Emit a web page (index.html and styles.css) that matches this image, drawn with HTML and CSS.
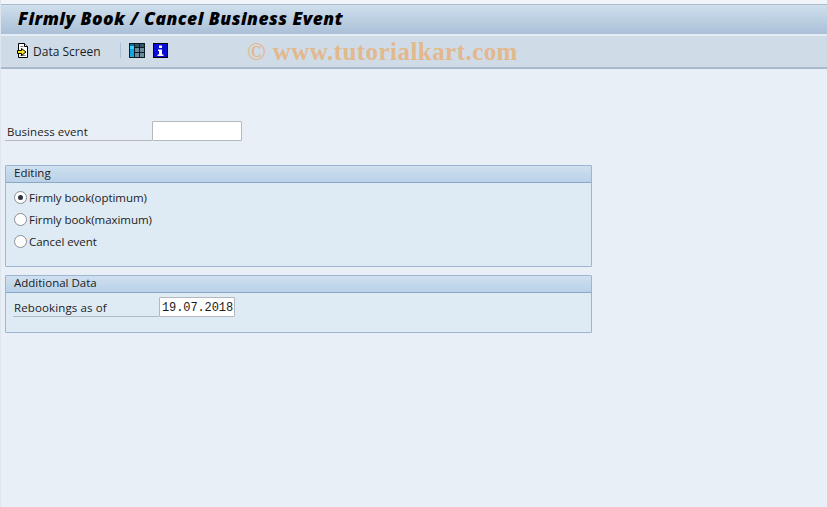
FILE: index.html
```html
<!DOCTYPE html>
<html lang="en">
<head>
<meta charset="utf-8">
<title>Firmly Book / Cancel Business Event</title>
<link rel="stylesheet" href="styles.css">
</head>
<body>
<div class="window">
  <header class="titlebar"><h1 class="title">Firmly Book / Cancel Business Event</h1></header>
  <div class="toolbar">
    <button class="tool tool-text">
      <svg class="icon" width="14" height="15" viewBox="0 0 14 15"><path d="M2.500.5h6l3 3v11h-9z" fill="#fff" stroke="#000"/><path d="M8.500.5v3h3" fill="#ddd" stroke="#000"/><path d="M4.500 3.500h3M4.500 12.500h5" stroke="#777"/><path d="M1.500 7.500h4v-2l4.500 3.500-4.500 3.500v-2h-4z" fill="#f8e020" stroke="#000"/></svg>
      <span>Data Screen</span>
    </button>
    <span class="sep"></span>
    <svg class="icon grid-icon" width="16" height="15" viewBox="0 0 16 15"><rect width="16" height="15" fill="#0c1a22"/><path d="M1 1h4v2H1z" fill="#0c6f96"/><path d="M1 3h4v3H1z" fill="#30d0f8"/><path d="M1 6h4v8H1z" fill="#14a4e0"/><path d="M6 1h4v3H6zM11 1h4v3h-4z" fill="#2f5566"/><path d="M6 5h4v4H6zM11 5h4v4h-4zM6 10h4v4H6zM11 10h4v4h-4z" fill="#6d8a9a"/></svg>
    <svg class="icon info-icon" width="15" height="15" viewBox="0 0 15 15"><rect width="15" height="15" fill="#000"/><rect x="1" y="1" width="13" height="13" fill="#0a0ed0"/><path d="M6 2.500h3v2.500H6zM5 6.500h4v5h1.500v1.500h-6v-1.500H6v-3.500H5z" fill="#fff"/></svg>
  </div>
  <div class="watermark">© www.tutorialkart.com</div>

  <main class="content">
    <div class="field-row top-field">
      <label class="field-label label-event">Business event</label>
      <span class="input input-event"></span>
    </div>

    <section class="group group-editing">
      <h2 class="group-title">Editing</h2>
      <div class="group-body radios">
        <div class="radio-row"><span class="radio checked"></span><span>Firmly book(optimum)</span></div>
        <div class="radio-row"><span class="radio"></span><span>Firmly book(maximum)</span></div>
        <div class="radio-row"><span class="radio"></span><span>Cancel event</span></div>
      </div>
    </section>

    <section class="group group-additional">
      <h2 class="group-title">Additional Data</h2>
      <div class="group-body">
        <div class="field-row">
          <label class="field-label label-rebook">Rebookings as of</label>
          <span class="input input-date">19.07.2018</span>
        </div>
      </div>
    </section>
  </main>
</div>
</body>
</html>
```
FILE: styles.css
```css
* { box-sizing: border-box; }
html, body { margin: 0; height: 100%; }
body {
  background: #e8eff7;
  font-family: "Open Sans", "Noto Sans", sans-serif;
  font-size: 11.5px;
  color: #1c1c1c;
  overflow: hidden;
}
.window {
  position: relative;
  height: 507px;
  padding-top: 4px;
  background: #f1f4f8;
  border-left: 1px solid #dfe5ec;
}
.titlebar {
  height: 32px;
  padding: 0 0 4px 17px;
  display: flex;
  align-items: center;
  border-top: 1px solid #a9bad0;
  border-bottom: 2px solid #e4edf5;
  background: linear-gradient(#cfdfec, #aac0d8);
}
.title {
  margin: 0;
  font-family: "Open Sans", sans-serif;
  font-size: 17.5px;
  font-weight: 800;
  font-style: italic;
  letter-spacing: 0.45px;
  color: #000;
  white-space: nowrap;
}
.toolbar {
  height: 33px;
  padding: 0 0 3px 15px;
  display: flex;
  align-items: center;
  background: #cfdce8;
  border-bottom: 2px solid #a9b8cb;
}
.tool {
  display: flex;
  align-items: center;
  gap: 3px;
  padding: 0;
  border: 0;
  background: none;
  font: inherit;
  font-size: 12px;
  color: inherit;
}
.tool span { position: relative; top: 1px; }
.icon { display: block; flex: none; }
.sep {
  width: 1px;
  height: 15px;
  margin: 0 8px 0 19px;
  background: #a9c0d8;
}
.info-icon { margin-left: 8px; }
.watermark {
  position: absolute;
  left: 246px;
  top: 38px;
  font-family: "Liberation Serif", serif;
  font-size: 25px;
  font-weight: bold;
  letter-spacing: 0.45px;
  color: #e3b88c;
  white-space: nowrap;
}
.content {
  background: #e8eff7;
  height: 438px;
  padding: 52px 0 0 4px;
}
.field-row { display: flex; align-items: flex-end; }
.field-label {
  display: block;
  height: 20px;
  line-height: 21px;
  border-bottom: 1px solid #b4b9bf;
  padding-left: 2px;
}
.label-event { width: 147px; letter-spacing: 0.05px; }
.top-field { height: 20px; }
.input {
  display: block;
  height: 20px;
  background: #fff;
  border: 1px solid #b5b9bd;
  border-radius: 1px;
}
.input-event { width: 90px; }
.group {
  width: 587px;
  border: 1px solid #9db5d0;
  background: #deeaf4;
  border-radius: 1px;
}
.group-editing { margin-top: 24px; height: 102px; }
.group-additional { margin-top: 8px; height: 58px; }
.group-title {
  margin: 0;
  height: 17px;
  padding-left: 8px;
  font-size: 11.5px;
  font-weight: normal;
  line-height: 14px;
  background: linear-gradient(#cfe0f0, #b9d1e8);
  border-bottom: 1px solid #8ba8c6;
}
.radios { padding-top: 3px; }
.radio-row {
  height: 22px;
  display: flex;
  align-items: center;
  padding-left: 8px;
  letter-spacing: -0.05px;
}
.radio {
  width: 13px;
  height: 13px;
  margin-right: 2px;
  border-radius: 50%;
  border: 1px solid #8c8f92;
  background: #fff;
  display: flex;
  align-items: center;
  justify-content: center;
}
.radio.checked::after {
  content: "";
  width: 5px;
  height: 5px;
  border-radius: 50%;
  background: #2c3440;
}
.group-body .field-row { padding: 4px 0 0 7px; }
.label-rebook { width: 146px; padding-left: 1px; letter-spacing: 0.12px; }
.input-date {
  width: 76px;
  padding-left: 2px;
  font-family: "Liberation Mono", monospace;
  font-size: 12px;
  letter-spacing: -0.1px;
  line-height: 20px;
}
```
